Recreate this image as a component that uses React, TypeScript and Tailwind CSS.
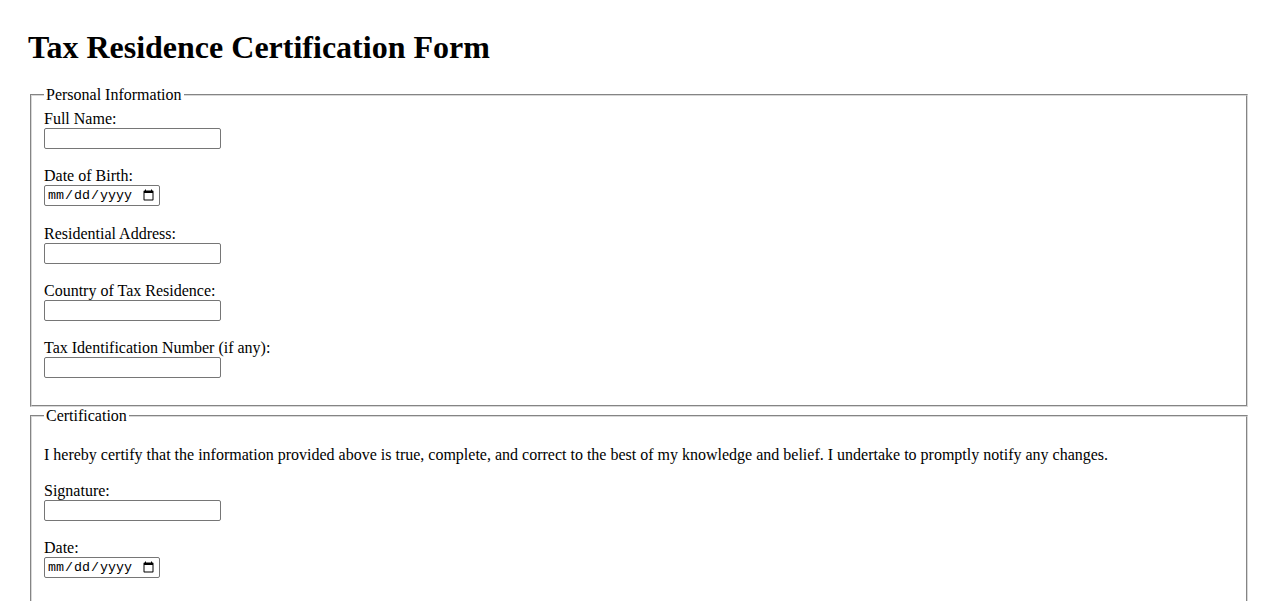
export default function App() {
  return (
    <main className="min-h-screen bg-white px-[28px] pt-[29px] pb-[20px] font-['Liberation_Serif','Times_New_Roman',serif] text-[16px] leading-[normal] text-black">
      <h1 className="mb-[20.44px] text-[32px] font-bold leading-[normal]">Tax Residence Certification Form</h1>

      <form>
        <fieldset className="mx-[2px] border-2 border-[#d8d8d8] px-[12px] pt-[5.6px] pb-[8.6px] [border-style:groove]">
          <legend className="px-[2px]">Personal Information</legend>
          <TextField id="fullName" label="Full Name:" />
          <DateField id="dob" label="Date of Birth:" />
          <TextField id="address" label="Residential Address:" />
          <TextField id="country" label="Country of Tax Residence:" />
          <TextField id="tin" label="Tax Identification Number (if any):" />
        </fieldset>

        <fieldset className="mx-[2px] border-2 border-[#d8d8d8] px-[12px] pt-[5.6px] pb-[8.6px] [border-style:groove]">
          <legend className="px-[2px]">Certification</legend>
          <p className="mt-[15.5px] mb-[17.5px]">
            I hereby certify that the information provided above is true, complete, and correct to the best of my
            knowledge and belief. I undertake to promptly notify any changes.
          </p>
          <TextField id="signature" label="Signature:" />
          <DateField id="date" label="Date:" />
        </fieldset>
      </form>
    </main>
  );
}

function TextField({ id, label }: { id: string; label: string }) {
  return (
    <div className="mb-[18.3px]">
      <label htmlFor={id} className="block">
        {label}
      </label>
      <input
        id={id}
        type="text"
        className="block h-[21px] w-[177px] rounded-[2px] border border-[#767676] bg-white px-[2px] font-['Liberation_Sans',Arial,sans-serif] text-[13.33px]"
      />
    </div>
  );
}

function DateField({ id, label }: { id: string; label: string }) {
  return (
    <div className="mb-[18.3px]">
      <label htmlFor={id} className="block">
        {label}
      </label>
      <input
        id={id}
        type="date"
        className="block h-[21px] w-[116px] rounded-[2px] border border-[#767676] bg-white px-[2px] font-['Liberation_Mono','Courier_New',monospace] text-[13.33px] text-black"
      />
    </div>
  );
}
